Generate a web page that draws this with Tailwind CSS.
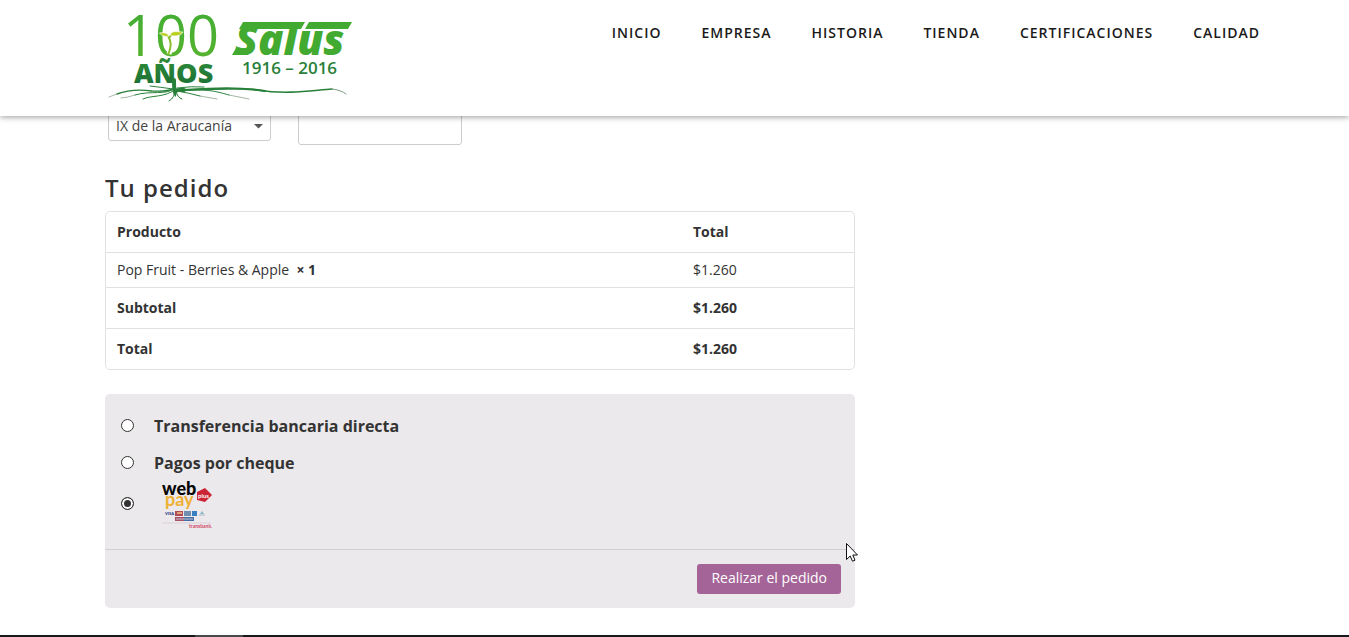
<!DOCTYPE html>
<html lang="es">
<head>
<meta charset="utf-8">
<meta name="viewport" content="width=device-width, initial-scale=1">
<title>Finalizar compra - Salus</title>
<script src="https://cdn.jsdelivr.net/npm/@tailwindcss/browser@4"></script>
</head>
<body class="flex min-h-screen flex-col bg-white font-['Open_Sans','Noto_Sans',sans-serif] text-sm text-[#333]">
<header class="relative z-10 flex h-[116px] items-start justify-between bg-white pr-[89px] pl-[105px] shadow-[0_1px_6px_rgba(0,0,0,0.4)]">
  <a href="#" aria-label="Salus 100 años" class="shrink-0">
    <svg class="block overflow-visible" width="250" height="104" viewBox="105 0 250 104" font-family="Open Sans, sans-serif">
      <defs>
        <linearGradient id="leaf" x1="0" y1="0" x2="0" y2="1"><stop offset="0" stop-color="#3cab36"/><stop offset="1" stop-color="#5bb52c"/></linearGradient>
        <linearGradient id="dark" x1="0" y1="0" x2="0" y2="1"><stop offset="0" stop-color="#32903a"/><stop offset="1" stop-color="#176b33"/></linearGradient>
      </defs>
      <text x="123" y="56" font-size="56" fill="url(#leaf)">100</text>
      <path d="M169 54C172 45 171 41 169 36" fill="none" stroke="#fff" stroke-width="5"/>
      <path d="M168 55C172 45 171 41 168 36M169 38C171 34 173 34 176 33" fill="none" stroke="#8abf2c" stroke-width="2"/>
      <path d="M169 36C165 37 162 36 159.500 33C164 32 168 33 169 36ZM170 35C172 30 177 32 183 32C181 36 174 37 170 35Z" fill="#b9cf1d" stroke="#fff" stroke-width="0.700"/>
      <text x="134" y="83" font-weight="800" font-size="27" fill="url(#dark)">AÑOS</text>
      <g fill="none" stroke="#278039" stroke-linecap="round">
        <path d="M184 90C215 90 238 87 257 90C289 95 314 90 332 89" stroke-width="1.600"/>
        <path d="M332 89Q341 90 346 94" stroke="#7d9a80" stroke-width="1"/>
        <path d="M173 89C166 92 159 91 152 91C137 89 125 91 117 94" stroke-width="1.400"/>
        <path d="M117 94L109 97M135 95Q126 98 121 98M200 96L217 99M229 95L249 99" stroke="#8da590" stroke-width="0.800"/>
        <path d="M175 88C166 96 151 90 135 95M176 89C165 98 151 95 143 99" stroke-width="1"/>
        <path d="M174 90Q176 97 169 101M176 90Q177 98 182 99M177 91Q189 93 200 96M185 90C210 89 218 92 229 95M173 89Q159 87 150 86M177 88Q192 86 204 87" stroke-width="1"/>
        <path d="M174 80C174 86 174 90 175 92C176 89 180 90 184 90" stroke-width="4"/>
        <path d="M184 90C215 88 240 87 265 91" stroke-width="2"/>
      </g>
      <g fill="#43aa31">
        <path d="M243 22H305L301 29H239Z"/>
        <path d="M309 22H352L348 29H305Z"/>
        <path d="M236 48H248V55H232Z"/>
        <text x="235" y="55" font-weight="800" font-style="italic" font-size="42">Salus</text>
      </g>
      <text x="242" y="74" font-weight="600" font-size="17" fill="#287f39">1916 – 2016</text>
    </svg>
  </a>
  <nav class="flex gap-10 pt-6 text-sm leading-[18px] font-semibold tracking-[1px] text-[#1a1a1a]">
    <a href="#">INICIO</a><a href="#">EMPRESA</a><a href="#">HISTORIA</a><a href="#">TIENDA</a><a href="#">CERTIFICACIONES</a><a href="#">CALIDAD</a>
  </nav>
</header>
<main class="-mt-2 w-full flex-1 px-[105px]">
  <form class="max-w-[750px]">
    <div class="flex items-start gap-[27px] pl-[3px]">
      <div class="relative w-[163px]">
        <select aria-label="Región" class="block h-[33px] w-full appearance-none rounded-[3px] border border-[#ccc] bg-white pt-[3px] pl-[7px] text-sm text-[#444]"><option>IX de la Araucanía</option></select>
        <svg class="pointer-events-none absolute top-4 right-2" width="9" height="5"><path d="M0 0H9L4.500 4.500Z" fill="#555"/></svg>
      </div>
      <input type="text" aria-label="Código postal" class="h-[37px] w-[164px] rounded-[3px] border border-[#ccc] bg-white px-2">
    </div>
    <h2 class="mt-[27px] text-2xl leading-8 font-semibold tracking-[1px]">Tu pedido</h2>
    <table class="mt-[7px] w-full border-separate border-spacing-0 rounded-[5px] border border-[#e1e1e1] text-left">
      <thead>
        <tr class="h-10"><th class="w-[77%] px-[11px] font-bold">Producto</th><th class="px-[11px] font-bold">Total</th></tr>
      </thead>
      <tbody>
        <tr class="h-[35px]"><td class="border-t border-[#e1e1e1] px-[11px]">Pop Fruit - Berries &amp; Apple&nbsp; <strong>× 1</strong></td><td class="border-t border-[#e1e1e1] px-[11px]">$1.260</td></tr>
      </tbody>
      <tfoot>
        <tr class="h-[41px]"><th class="border-t border-[#e1e1e1] px-[11px]">Subtotal</th><td class="border-t border-[#e1e1e1] px-[11px] font-bold">$1.260</td></tr>
        <tr class="h-[41px]"><th class="border-t border-[#e1e1e1] px-[11px]">Total</th><td class="border-t border-[#e1e1e1] px-[11px] font-bold">$1.260</td></tr>
      </tfoot>
    </table>
    <section class="mt-6 rounded-[5px] bg-[#ebe9eb]" aria-label="Forma de pago">
      <div class="flex flex-col border-b border-[#d3ced2] px-4 pt-[13px] pb-4 text-base font-bold">
        <label class="flex h-[37px] items-center gap-5"><input type="radio" name="pago" class="size-[13px] appearance-none rounded-full border border-[#333] bg-white checked:border-[#333] checked:bg-[#333] checked:shadow-[inset_0_0_0_2px_#fff]">Transferencia bancaria directa</label>
        <label class="flex h-[37px] items-center gap-5"><input type="radio" name="pago" class="size-[13px] appearance-none rounded-full border border-[#333] bg-white checked:border-[#333] checked:bg-[#333] checked:shadow-[inset_0_0_0_2px_#fff]">Pagos por cheque</label>
        <label class="flex h-[52px] items-center gap-5 pb-[7px]"><input type="radio" name="pago" checked aria-label="Webpay Plus" class="size-[13px] appearance-none rounded-full border border-[#333] bg-white checked:border-[#333] checked:bg-[#333] checked:shadow-[inset_0_0_0_2px_#fff]">
          <svg class="ml-2 overflow-visible" width="52" height="50" viewBox="0 0 52 50" font-family="Lato, sans-serif">
            <text x="0" y="16" font-size="18" font-weight="900" fill="#050505">web</text>
            <text x="3" y="27" font-size="18" font-weight="700" fill="#efb036">pay</text>
            <path d="M35 13L43 9L50 16L43 23L35 21Z" fill="#cb2434"/>
            <text x="36" y="19" font-size="6" font-weight="700" fill="#fff">plus</text>
            <text x="3" y="36" font-size="4" font-weight="900" fill="#283c83">VISA</text>
            <path d="M13 32H21V37H13Z" fill="#b34b56"/><path d="M15 33H20V35H15Z" fill="#e1a57c"/>
            <path d="M22 32H29V37H22Z" fill="#718db0"/><path d="M30 32H35V37H30Z" fill="#3a80c0"/><path d="M38 35L40 32L42 35Z" fill="#88b5c7"/><path d="M37 36H43" stroke="#a7bbc8"/>
            <path d="M13 38H22V42H13Z" fill="#a85066"/><path d="M22 38H32V42H22Z" fill="#456fa4"/><path d="M14 40H31" stroke="#c1c3d3"/>
            <path d="M0 44H49" stroke="#ddd2d9" stroke-width="1"/>
            <text x="27" y="49" font-size="5" font-weight="700" fill="#d34869">transbank.</text>
          </svg>
        </label>
      </div>
      <div class="flex justify-end p-[14px]">
        <button type="button" class="h-[30px] rounded-[3px] bg-[#a46497] px-[14px] pb-[2px] text-sm text-white">Realizar el pedido</button>
      </div>
    </section>
  </form>
</main>
<footer class="flex h-[2px] bg-[#16181c] pl-[195px]"><div class="w-12 bg-[#484848]"></div></footer>
<svg class="pointer-events-none absolute top-[543px] left-[846px] z-20" width="12" height="20" viewBox="0 0 12 20"><path d="M0.500 0.500V16.500L4.200 13L6.500 18.200L9 17.200L6.800 12H11.500Z" fill="#fff" stroke="#111"/></svg>
</body>
</html>
